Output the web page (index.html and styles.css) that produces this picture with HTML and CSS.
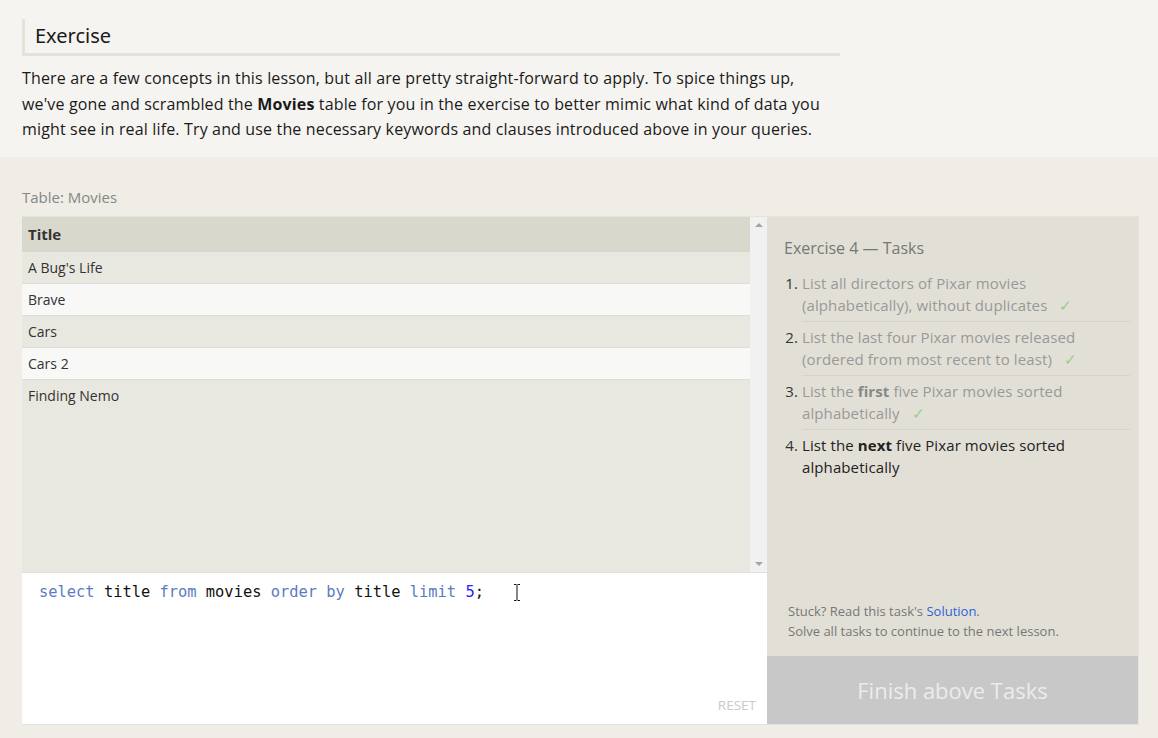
FILE: index.html
```html
<!DOCTYPE html>
<html>
<head>
<meta charset="utf-8">
<link rel="stylesheet" href="styles.css">
</head>
<body>
<section class="intro">
  <h2 class="intro-title">Exercise</h2>
  <p class="intro-text">There are a few concepts in this lesson, but all are pretty straight-forward to apply. To spice things up, we've gone and scrambled the <strong>Movies</strong> table for you in the exercise to better mimic what kind of data you might see in real life. Try and use the necessary keywords and clauses introduced above in your queries.</p>
</section>
<section class="lower">
  <div class="table-label">Table: Movies</div>
  <div class="workspace">
    <div class="left">
      <div class="results">
        <div class="rows">
          <div class="row head">Title</div>
          <div class="row odd">A Bug's Life</div>
          <div class="row even">Brave</div>
          <div class="row odd">Cars</div>
          <div class="row even">Cars 2</div>
          <div class="row odd last">Finding Nemo</div>
        </div>
        <div class="scrollbar">
          <span class="arrow up"></span>
          <span class="arrow down"></span>
        </div>
      </div>
      <div class="editor">
        <div class="code"><span class="kw">select</span> title <span class="kw">from</span> movies <span class="kw">order</span> <span class="kw">by</span> title <span class="kw">limit</span> <span class="num">5</span>;</div>
        <svg class="ibeam" width="8" height="17" viewBox="0 0 8 17"><path d="M1 0.5h2.5M4.5 0.5h2.5M4 1v15M1 16.5h2.5M4.5 16.5h2.5" stroke="#111" stroke-width="1" fill="none"/></svg>
        <div class="reset">RESET</div>
      </div>
    </div>
    <div class="tasks">
      <div class="tasks-body">
        <h3 class="tasks-title">Exercise 4 — Tasks</h3>
        <ol class="task-list">
          <li class="done">List all directors of Pixar movies (alphabetically), without duplicates <span class="check">✓</span></li>
          <li class="done">List the last four Pixar movies released (ordered from most recent to least) <span class="check">✓</span></li>
          <li class="done">List the <b>first</b> five Pixar movies sorted alphabetically <span class="check">✓</span></li>
          <li>List the <b>next</b> five Pixar movies sorted alphabetically</li>
        </ol>
      </div>
      <div class="tasks-foot">
        <div>Stuck? Read this task's <a class="link">Solution</a>.</div>
        <div>Solve all tasks to continue to the next lesson.</div>
      </div>
      <div class="finish">Finish above Tasks</div>
    </div>
  </div>
</section>
</body>
</html>
```
FILE: styles.css
```css
html, body {
  margin: 0;
  padding: 0;
}
body {
  font-family: "Open Sans", "Noto Sans", sans-serif;
  background: #efede5;
  color: #222;
  width: 1158px;
  height: 738px;
  overflow: hidden;
}
.intro {
  background: #f5f4f0;
  padding: 19px 22px 0 22px;
  height: 138px;
}
.intro-title {
  margin: 0;
  width: 805px;
  border-left: 3px solid #e5e3d8;
  border-bottom: 3px solid #e5e3d8;
  padding: 4px 0 4px 10px;
  font-weight: normal;
  font-size: 20px;
  line-height: 26px;
  color: #1a1a1a;
  font-family: "Noto Sans", "Open Sans", sans-serif;
}
.intro-text {
  margin: 10px 0 0 0;
  width: 812px;
  font-size: 16px;
  letter-spacing: 0.15px;
  line-height: 25.5px;
  color: #1a1a1a;
}
.intro-text strong {
  font-weight: bold;
}
.lower {
  padding: 30px 20px 0 22px;
}
.table-label {
  font-size: 15px;
  line-height: 20px;
  color: #858789;
  height: 29px;
}
.workspace {
  display: grid;
  grid-template-columns: 745px 371px;
  border: 1px solid #e6e4da;
  border-left: none;
  width: 1116px;
}
.left {
  display: flex;
  flex-direction: column;
}
.results {
  display: flex;
  height: 355px;
  background: #e9e8e0;
  border-bottom: 1px solid #e2e1d9;
}
.rows {
  flex: 1;
}
.row {
  height: 31px;
  line-height: 31px;
  padding-left: 6px;
  font-size: 14px;
  color: #333;
  border-bottom: 1px solid #dddcd6;
}
.row.head {
  height: 35px;
  line-height: 35px;
  background: #d9d8cc;
  font-weight: bold;
  font-size: 15px;
  border-bottom: none;
}
.row.odd {
  background: #e9e8e0;
}
.row.even {
  background: #f8f8f7;
}
.row.last {
  border-bottom: none;
}
.scrollbar {
  width: 17px;
  background: #f1f1f1;
  position: relative;
}
.arrow {
  position: absolute;
  left: 5px;
  width: 0;
  height: 0;
  border-left: 4px solid transparent;
  border-right: 4px solid transparent;
}
.arrow.up {
  top: 6px;
  border-bottom: 4px solid #a3a3a3;
}
.arrow.down {
  bottom: 6px;
  border-top: 4px solid #a3a3a3;
}
.editor {
  background: #fff;
  height: 151px;
  position: relative;
}
.code {
  font-family: "DejaVu Sans Mono", "Liberation Mono", monospace;
  font-size: 15.4px;
  line-height: 20px;
  padding: 9px 0 0 17px;
  color: #111;
}
.kw {
  color: #5b7cc0;
}
.num {
  color: #1f1fff;
}
.ibeam {
  position: absolute;
  left: 491px;
  top: 11px;
}
.reset {
  position: absolute;
  right: 11px;
  bottom: 10px;
  font-size: 13.5px;
  color: #c9c9c9;
}
.tasks {
  background: #e2e0d6;
  display: flex;
  flex-direction: column;
}
.tasks-body {
  flex: 1;
  padding: 20px 8px 0 17px;
}
.tasks-title {
  margin: 0 0 9px 0;
  font-weight: normal;
  font-size: 16px;
  line-height: 22px;
  color: #777;
}
.task-list {
  margin: 0;
  padding: 0 0 0 18px;
  font-size: 15px;
  letter-spacing: 0.1px;
  line-height: 22px;
}
.task-list li {
  color: #222;
  padding: 4px 0 5px 0;
  border-bottom: 1px solid #d6d4ca;
}
.task-list li:last-child {
  border-bottom: none;
}
.task-list li::marker {
  color: #333;
}
.task-list li.done {
  color: #999;
}
.task-list b {
  font-weight: bold;
}
.task-list li.done b {
  color: #888;
}
.check {
  color: #8fcf8f;
  margin-left: 8px;
}
.tasks-foot {
  padding: 0 0 15px 21px;
  font-size: 13px;
  line-height: 20px;
  color: #777;
}
.link {
  color: #2f62d6;
}
.finish {
  height: 68px;
  line-height: 68px;
  background: #c8c8c8;
  color: #ececec;
  text-align: center;
  font-size: 22px;
}
```
